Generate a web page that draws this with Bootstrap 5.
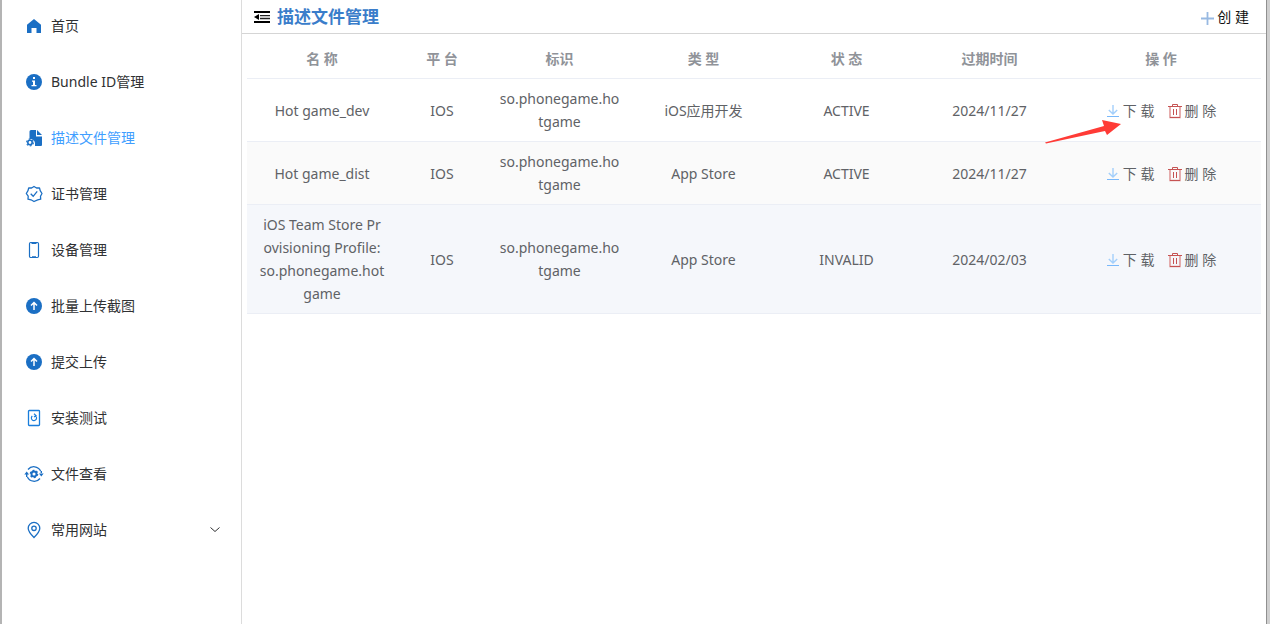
<!DOCTYPE html>
<html lang="zh-CN">
<head>
<meta charset="utf-8">
<meta name="viewport" content="width=device-width, initial-scale=1">
<title>描述文件管理</title>
<link rel="stylesheet" href="https://cdn.jsdelivr.net/npm/bootstrap@5.3.0/dist/css/bootstrap.min.css">
<style>
  body { font-family: "Noto Sans", "Noto Sans CJK SC", sans-serif; font-size: 14px; line-height: 23px; color: #303133; background: #fff; }
  .window { border-left: 2px solid #b4b4b4; border-right: 3px solid #cfcfcf; }
  .workspace { box-shadow: inset -1px 0 #909090; padding-right: 1px; min-width: 0; }
  .sidebar { width: 240px; border-right: 1px solid #dcdcdc; padding: 11px 20px 11px 22px; }
  .menu { gap: 26px; }
  .menu-link { height: 30px; gap: 7px; line-height: 20px; color: #303133; }
  .menu-link.active { color: #409eff; }
  .menu-link svg { width: 20px; height: 20px; flex: none; color: #1b6fc4; }
  .menu-link svg.chevron { width: 12px; height: 12px; color: #303133; }
  .topbar { height: 34px; border-bottom: 1px solid #d5d5d5; padding: 0 17px 0 12px; }
  .page-title { font-size: 17px; line-height: 24px; font-weight: 700; color: #3a7dca; }
  .plain-btn { border: 0; background: none; padding: 0; color: #5f6266; font-size: 14px; line-height: 23px; gap: 3px; }
  .plain-btn.create-btn { color: #111; }
  .fold-btn { margin-right: 7px; }
  .table-area { padding: 5px; }
  .profiles { table-layout: fixed; width: 100%; margin: 0; text-align: center; color: #606266; }
  .profiles th, .profiles td { padding: 8px 12px; border-bottom: 1px solid #ebeef5; vertical-align: middle; word-break: break-all; }
  .profiles th { color: #909399; font-weight: 600; }
  .profiles .even td { background: #fafafa; }
  .profiles .hovered td { background: #f5f7fb; }
  .profiles svg { padding-top: 1px; box-sizing: content-box; }
  .row-actions { gap: 13px; }
  .col-title { width: 150px; } .col-platform { width: 90px; } .col-ident { width: 145px; } .col-ops { width: 200px; }
  .pointer { position: absolute; left: -61px; top: 19px; width: 78px; height: 26px; pointer-events: none; }
</style>
</head>
<body>
<svg width="0" height="0" class="position-absolute" aria-hidden="true">
  <symbol id="up" viewBox="0 0 20 20"><circle cx="10" cy="10" r="8" fill="currentColor"/><path d="M10 14V7M7 9.500l3-3 3 3" fill="none" stroke="#fff" stroke-width="1.500"/></symbol>
  <symbol id="download" viewBox="0 0 14 14"><path d="M7 1v8.500M2.800 6L7 10l4.200-4" fill="none" stroke="#a3cffb" stroke-width="1.400"/><path d="M1 12.500h12" stroke="#79b8fa"/></symbol>
  <symbol id="trash" viewBox="0 0 14 16"><path d="M2 3v11.500h10V3" fill="none" stroke="#e09a9a" stroke-width="1.600"/><path d="M0 3.500h14M4.500 3V1.500h5V3M2 14.500h10M5.500 6v6M8.500 6v6" fill="none" stroke="#c65353"/></symbol>
</svg>
<div class="window d-flex min-vh-100">
  <nav class="sidebar flex-shrink-0" aria-label="主菜单">
    <ul class="menu list-unstyled d-flex flex-column m-0">
      <li><a href="#" class="menu-link d-flex align-items-center text-decoration-none"><svg viewBox="0 0 20 20"><path d="M10 3 3 8.700V17h4.500v-5h5v5H17V8.700Z" fill="currentColor"/></svg><span>首页</span></a></li>
      <li><a href="#" class="menu-link d-flex align-items-center text-decoration-none"><svg viewBox="0 0 20 20"><circle cx="10" cy="10" r="8" fill="currentColor"/><path d="M9 5h2v2H9zM8 8.500h3V13h1.500v1.200h-5V13H9V9.700H8z" fill="#fff"/></svg><span>Bundle ID管理</span></a></li>
      <li><a href="#" class="menu-link active d-flex align-items-center text-decoration-none" aria-current="page"><svg viewBox="0 0 20 20"><path d="M7 2h5v6.500h6V17q0 1-1 1h-6v-3a5 5 0 0 0-5.500-4V3.500Q5.500 2 7 2Z" fill="currentColor"/><path d="M13 2v5h5Z" fill="currentColor"/><circle cx="6" cy="14.500" r="2.200" fill="none" stroke="currentColor" stroke-width="1.600"/><circle cx="6" cy="14.500" r="3.400" fill="none" stroke="currentColor" stroke-width="1.100" stroke-dasharray="1.800 1.760"/></svg><span>描述文件管理</span></a></li>
      <li><a href="#" class="menu-link d-flex align-items-center text-decoration-none"><svg viewBox="0 0 20 20"><path d="M10 2.500 12.500 4l3-.2.700 2.900L18 9.500l-1.500 2.700.2 3-3 .6L10 17.500l-3-1.700-3-.6.200-3L2.300 9.500l1.700-2.800.700-2.900 2.900.2Z" fill="none" stroke="currentColor" stroke-width="1.300" stroke-linejoin="round"/><path d="m6.700 9.700 2.500 2.600 4-5" fill="none" stroke="currentColor" stroke-width="1.300"/></svg><span>证书管理</span></a></li>
      <li><a href="#" class="menu-link d-flex align-items-center text-decoration-none"><svg viewBox="0 0 20 20"><rect x="5.500" y="2.500" width="9" height="15" rx="1.200" fill="none" stroke="currentColor" stroke-width="1.200"/><path d="M7.500 3.200h5M8 17h4" stroke="currentColor" stroke-width="1.500"/></svg><span>设备管理</span></a></li>
      <li><a href="#" class="menu-link d-flex align-items-center text-decoration-none"><svg><use href="#up"/></svg><span>批量上传截图</span></a></li>
      <li><a href="#" class="menu-link d-flex align-items-center text-decoration-none"><svg><use href="#up"/></svg><span>提交上传</span></a></li>
      <li><a href="#" class="menu-link d-flex align-items-center text-decoration-none"><svg viewBox="0 0 20 20" fill="none" stroke="#197ddb"><rect x="4.500" y="2.500" width="11" height="15" rx=".8" stroke-width="1.300"/><path d="M11.500 7.900a2.600 2.600 0 1 1-3.200.1M10 5.800l2 1.800-2 1.300" stroke-width="1.200"/></svg><span>安装测试</span></a></li>
      <li><a href="#" class="menu-link d-flex align-items-center text-decoration-none"><svg viewBox="0 0 20 20"><path d="M4 5.500a7.500 7.500 0 0 1 12.600 1.500M16 14.500a7.500 7.500 0 0 1-12.600-1.500" fill="none" stroke="currentColor" stroke-width="1.300"/><path d="M.3 10.500 2.700 7.500l2.400 3ZM14.900 9.500l2.400 3 2.400-3ZM2 10h1.400v3H2zM16.600 7H18v3h-1.400z" fill="currentColor"/><circle cx="10" cy="10" r="2.500" fill="none" stroke="currentColor" stroke-width="1.900"/><circle cx="10" cy="10" r="3.700" fill="none" stroke="currentColor" stroke-width="1.200" stroke-dasharray="1.900 1.970"/></svg><span>文件查看</span></a></li>
      <li><a href="#" class="menu-link d-flex align-items-center text-decoration-none"><svg viewBox="0 0 20 20" fill="none" stroke="currentColor" stroke-width="1.300"><path d="M10 17.500C6.500 14 4.200 11 4.200 8.200a5.800 5.800 0 0 1 11.600 0C15.800 11 13.500 14 10 17.500Z"/><circle cx="10" cy="8.300" r="2.200"/></svg><span>常用网站</span><svg class="chevron ms-auto" viewBox="0 0 12 12"><path d="m1.500 3.500 4.500 4 4.500-4" fill="none" stroke="currentColor"/></svg></a></li>
    </ul>
  </nav>
  <main class="workspace flex-grow-1">
    <header class="topbar d-flex align-items-center">
      <button type="button" class="plain-btn fold-btn d-flex" aria-label="收起菜单"><svg width="16" height="14" viewBox="0 0 16 14"><path d="M0 2h16M0 12h16" stroke="#000" stroke-width="2.200"/><path d="M6 5.700h10M6 8.500h10" stroke="#222" stroke-width="1.300"/><path d="M0 7l5-3v6Z" fill="#000"/></svg></button>
      <h1 class="page-title m-0">描述文件管理</h1>
      <button type="button" class="plain-btn create-btn d-flex align-items-center ms-auto"><svg class="mt-1" width="13" height="13" viewBox="0 0 13 13"><path d="M0 6.500h13M6.500 0v13" stroke="#98b9e2" stroke-width="1.800"/></svg>创 建</button>
    </header>
    <div class="table-area">
      <table class="profiles">
        <colgroup><col class="col-title"><col class="col-platform"><col class="col-ident"><col><col><col><col class="col-ops"></colgroup>
        <thead><tr><th>名 称</th><th>平 台</th><th>标识</th><th>类 型</th><th>状 态</th><th>过期时间</th><th>操 作</th></tr></thead>
        <tbody>
          <tr><td>Hot game_dev</td><td>IOS</td><td>so.phonegame.hotgame</td><td>iOS应用开发</td><td>ACTIVE</td><td>2024/11/27</td>
            <td><div class="row-actions d-flex justify-content-center"><button type="button" class="plain-btn d-flex align-items-center position-relative"><svg width="14" height="14"><use href="#download"/></svg>下 载<svg class="pointer" viewBox="0 0 78 26"><path d="M0 23.500 59 7 57 1 76 5 62 16 60 12 1 24.500Z" fill="#ff3b36"/></svg></button><button type="button" class="plain-btn d-flex align-items-center"><svg width="14" height="16"><use href="#trash"/></svg>删 除</button></div></td></tr>
          <tr class="even"><td>Hot game_dist</td><td>IOS</td><td>so.phonegame.hotgame</td><td>App Store</td><td>ACTIVE</td><td>2024/11/27</td>
            <td><div class="row-actions d-flex justify-content-center"><button type="button" class="plain-btn d-flex align-items-center"><svg width="14" height="14"><use href="#download"/></svg>下 载</button><button type="button" class="plain-btn d-flex align-items-center"><svg width="14" height="16"><use href="#trash"/></svg>删 除</button></div></td></tr>
          <tr class="hovered"><td>iOS Team Store Pr<br>ovisioning Profile: <br>so.phonegame.hot<br>game</td><td>IOS</td><td>so.phonegame.hotgame</td><td>App Store</td><td>INVALID</td><td>2024/02/03</td>
            <td><div class="row-actions d-flex justify-content-center"><button type="button" class="plain-btn d-flex align-items-center"><svg width="14" height="14"><use href="#download"/></svg>下 载</button><button type="button" class="plain-btn d-flex align-items-center"><svg width="14" height="16"><use href="#trash"/></svg>删 除</button></div></td></tr>
        </tbody>
      </table>
    </div>
  </main>
</div>
<script src="https://cdn.jsdelivr.net/npm/bootstrap@5.3.0/dist/js/bootstrap.bundle.min.js"></script>
</body>
</html>
